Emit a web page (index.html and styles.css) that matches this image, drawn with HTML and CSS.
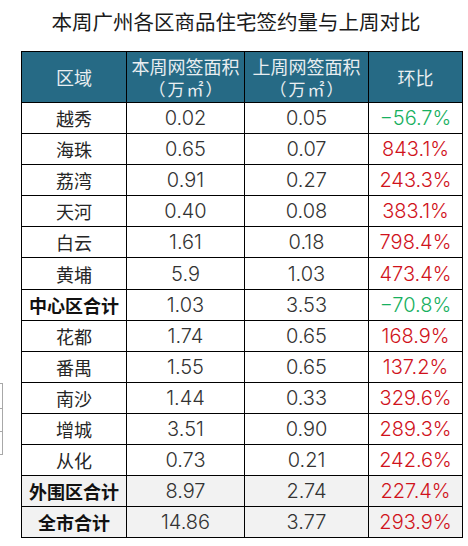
FILE: index.html
```html
<!DOCTYPE html>
<html lang="zh-CN">
<head>
<meta charset="utf-8">
<title>本周广州各区商品住宅签约量与上周对比</title>
<link rel="stylesheet" href="styles.css">
</head>
<body>
<div class="page">
  <h1 class="title">本周广州各区商品住宅签约量与上周对比</h1>
  <table class="data">
    <colgroup>
      <col class="c1"><col class="c2"><col class="c3"><col class="c4">
    </colgroup>
    <thead>
      <tr>
        <th>区域</th>
        <th><span class="hl">本周网签面积</span><span class="hl unit">（万㎡）</span></th>
        <th><span class="hl">上周网签面积</span><span class="hl unit">（万㎡）</span></th>
        <th>环比</th>
      </tr>
    </thead>
    <tbody>
      <tr><td class="name">越秀</td><td class="num">0.02</td><td class="num">0.05</td><td class="num down">−56.7%</td></tr>
      <tr><td class="name">海珠</td><td class="num">0.65</td><td class="num">0.07</td><td class="num up">843.1%</td></tr>
      <tr><td class="name">荔湾</td><td class="num">0.91</td><td class="num">0.27</td><td class="num up">243.3%</td></tr>
      <tr><td class="name">天河</td><td class="num">0.40</td><td class="num">0.08</td><td class="num up">383.1%</td></tr>
      <tr><td class="name">白云</td><td class="num">1.61</td><td class="num">0.18</td><td class="num up">798.4%</td></tr>
      <tr><td class="name">黄埔</td><td class="num">5.9</td><td class="num">1.03</td><td class="num up">473.4%</td></tr>
      <tr><td class="name total">中心区合计</td><td class="num">1.03</td><td class="num">3.53</td><td class="num down">−70.8%</td></tr>
      <tr><td class="name">花都</td><td class="num">1.74</td><td class="num">0.65</td><td class="num up">168.9%</td></tr>
      <tr><td class="name">番禺</td><td class="num">1.55</td><td class="num">0.65</td><td class="num up">137.2%</td></tr>
      <tr><td class="name">南沙</td><td class="num">1.44</td><td class="num">0.33</td><td class="num up">329.6%</td></tr>
      <tr><td class="name">增城</td><td class="num">3.51</td><td class="num">0.90</td><td class="num up">289.3%</td></tr>
      <tr><td class="name">从化</td><td class="num">0.73</td><td class="num">0.21</td><td class="num up">242.6%</td></tr>
      <tr class="shaded"><td class="name total">外围区合计</td><td class="num">8.97</td><td class="num">2.74</td><td class="num up">227.4%</td></tr>
      <tr class="shaded"><td class="name total">全市合计</td><td class="num">14.86</td><td class="num">3.77</td><td class="num up">293.9%</td></tr>
    </tbody>
  </table>
  <div class="edge-mark"></div>
</div>
</body>
</html>
```

FILE: styles.css
```css
html, body {
  margin: 0;
  padding: 0;
  background: #ffffff;
}

.page {
  position: relative;
  width: 468px;
  height: 546px;
}

.title {
  margin: 0;
  height: 51px;
  line-height: 42px;
  text-align: center;
  font-family: "Noto Sans CJK SC", sans-serif;
  font-weight: 400;
  font-size: 20.5px;
  color: #1a1a1a;
  padding-left: 4px;
}

.data {
  margin-left: 21px;
  border-collapse: collapse;
  table-layout: fixed;
  width: 441px;
  font-family: "Noto Sans CJK SC", sans-serif;
}

.c1 { width: 105px; }
.c2 { width: 118px; }
.c3 { width: 124px; }
.c4 { width: 94px; }

.data th,
.data td {
  border: 1px solid #000;
  padding: 0;
  text-align: center;
  vertical-align: middle;
}

.data thead tr {
  height: 51px;
}

.data th {
  background: #266a85;
  color: #e9eef1;
  font-weight: 400;
  font-size: 18px;
  line-height: 21px;
}

.hl {
  display: block;
  line-height: 21px;
  white-space: nowrap;
}

.unit {
  font-size: 17px;
  letter-spacing: 2px;
  padding-left: 2px;
  margin-top: 1px;
}

.data tbody tr {
  height: 31.1px;
}

.name {
  font-size: 18px;
  color: #262626;
}

.name.total {
  font-weight: 700;
  color: #111;
}

.num {
  font-family: "Inter", "Liberation Sans", sans-serif;
  font-weight: 300;
  font-size: 20px;
  color: #333;
}

.up { color: #d0121b; }
.down { color: #17b060; }

.shaded td {
  background: #f2f2f2;
}

.edge-mark {
  position: absolute;
  left: 0;
  top: 383px;
  width: 2px;
  height: 70px;
  border: 1px solid #a8a8a8;
  border-left: none;
  background:
    linear-gradient(#a8a8a8, #a8a8a8) 0 24px / 2px 1px no-repeat,
    linear-gradient(#a8a8a8, #a8a8a8) 0 47px / 2px 1px no-repeat;
}
```
